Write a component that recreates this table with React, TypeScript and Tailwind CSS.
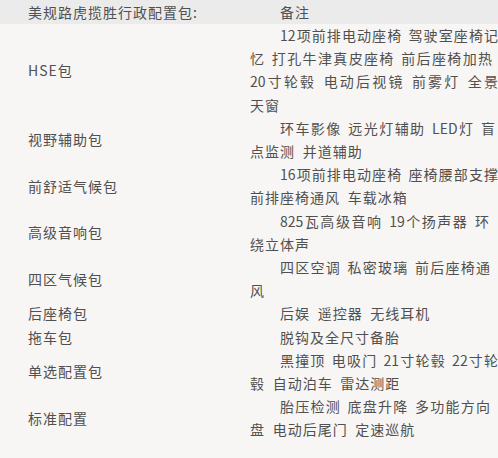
import React from "react";

type Line = { t: string; pr?: string };
type Row = { label: string; lines: Line[] };

const rows: Row[] = [
  {
    label: "HSE包",
    lines: [
      { t: "12项前排电动座椅 驾驶室座椅记" },
      { t: "忆 打孔牛津真皮座椅 前后座椅加热", pr: "pr-[6px]" },
      { t: "20寸轮毂 电动后视镜 前雾灯 全景" },
      { t: "天窗" },
    ],
  },
  { label: "视野辅助包", lines: [{ t: "环车影像 远光灯辅助 LED灯 盲", pr: "pr-[3px]" }, { t: "点监测 并道辅助" }] },
  { label: "前舒适气候包", lines: [{ t: "16项前排电动座椅 座椅腰部支撑" }, { t: "前排座椅通风 车载冰箱" }] },
  { label: "高级音响包", lines: [{ t: "825瓦高级音响 19个扬声器 环", pr: "pr-[9px]" }, { t: "绕立体声" }] },
  { label: "四区气候包", lines: [{ t: "四区空调 私密玻璃 前后座椅通", pr: "pr-[8px]" }, { t: "风" }] },
  { label: "后座椅包", lines: [{ t: "后娱 遥控器 无线耳机" }] },
  { label: "拖车包", lines: [{ t: "脱钩及全尺寸备胎" }] },
  { label: "单选配置包", lines: [{ t: "黑撞顶 电吸门 21寸轮毂 22寸轮" }, { t: "毂 自动泊车 雷达测距" }] },
  { label: "标准配置", lines: [{ t: "胎压检测 底盘升降 多功能方向", pr: "pr-[8px]" }, { t: "盘 电动后尾门 定速巡航" }] },
];

export default function App() {
  return (
    <div
      className="w-[498px] h-[458px] overflow-hidden bg-[#f7f6f4] text-[#505050] text-[14px] tracking-[1px] [word-spacing:3.5px]"
      style={{ fontFamily: '"Noto Sans CJK SC", "Noto Sans", sans-serif' }}
    >
      <div className="flex h-[24px] items-center bg-[#ebebeb] w-[498px]">
        <div className="w-[250px] shrink-0 pl-[28px]">美规路虎揽胜行政配置包:</div>
        <div className="flex-1 pl-[30px]">备注</div>
      </div>
      {rows.map((r) => (
        <div key={r.label} className="flex items-center leading-[23.2px]">
          <div className="w-[250px] shrink-0 pl-[28px]">{r.label}</div>
          <div className="w-[248px] shrink-0">
            {r.lines.map((l, i) => {
              const last = i === r.lines.length - 1;
              return (
                <div
                  key={i}
                  className={
                    (i === 0 ? "pl-[30px] " : "") +
                    (l.pr ? l.pr + " " : "") +
                    (last
                      ? "whitespace-nowrap"
                      : "whitespace-nowrap tracking-normal [word-spacing:2px] text-justify [text-align-last:justify] [text-justify:inter-character]")
                  }
                >
                  {l.t}
                </div>
              );
            })}
          </div>
        </div>
      ))}
    </div>
  );
}
